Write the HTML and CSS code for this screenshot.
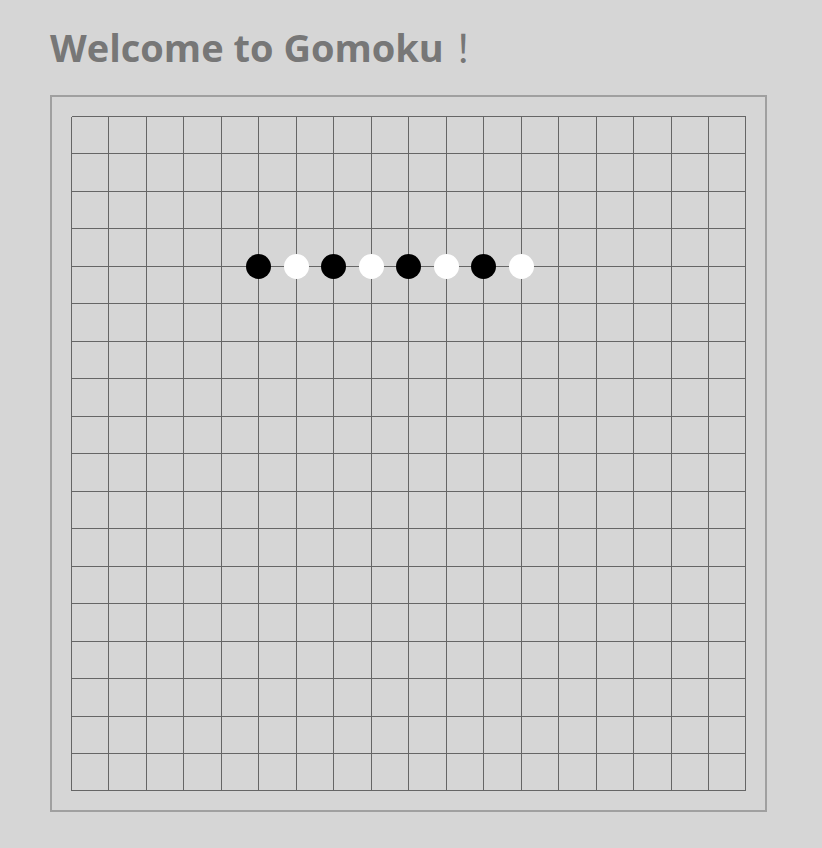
FILE: index.html
```html
<!DOCTYPE html>
<html>
<head>
<meta charset="utf-8">
<link rel="stylesheet" href="styles.css">
</head>
<body>
<div class="page">
  <h1 class="title">Welcome to Gomoku<span class="bang">！</span></h1>
  <div class="board">
    <svg class="grid" width="675" height="675" viewBox="0 0 675 675" id="grid"></svg>
  </div>
</div>
<script src="app.js"></script>
</body>
</html>
```

FILE: styles.css
```css
html, body {
  margin: 0;
  padding: 0;
  background: #d6d6d6;
}
.page {
  padding: 22px 0 0 50px;
  display: flex;
  flex-direction: column;
  align-items: flex-start;
}
.title {
  margin: 0;
  height: 48px;
  font-family: "Open Sans", "Noto Sans", "Noto Sans CJK SC", sans-serif;
  font-weight: 700;
  font-size: 38px;
  line-height: 48px;
  color: #777777;
}
.bang {
  font-family: "Noto Sans CJK SC", sans-serif;
  font-weight: 400;
  padding-left: 10px;
}
.board {
  margin-top: 25px;
  border: 2px solid #a0a0a0;
  padding: 19px;
  width: 675px;
  height: 675px;
}
.grid {
  display: block;
}
.grid line {
  stroke: #666666;
  stroke-width: 1;
  shape-rendering: crispEdges;
}
.stone-black { fill: #000000; }
.stone-white { fill: #ffffff; }
```

FILE: app.js
```js
(function () {
  var svg = document.getElementById('grid');
  var NS = 'http://www.w3.org/2000/svg';
  var n = 18, cell = 37.5;
  function pos(i) { return (i === n ? 674 : Math.floor(i * cell)) + 0.5; }
  for (var i = 0; i <= n; i++) {
    var p = pos(i);
    var v = document.createElementNS(NS, 'line');
    v.setAttribute('x1', p); v.setAttribute('x2', p);
    v.setAttribute('y1', 0.5); v.setAttribute('y2', 674.5);
    svg.appendChild(v);
    var h = document.createElementNS(NS, 'line');
    h.setAttribute('y1', p); h.setAttribute('y2', p);
    h.setAttribute('x1', 0.5); h.setAttribute('x2', 674.5);
    svg.appendChild(h);
  }
  var stones = [[5,'b'],[6,'w'],[7,'b'],[8,'w'],[9,'b'],[10,'w'],[11,'b'],[12,'w']];
  stones.forEach(function (s) {
    var c = document.createElementNS(NS, 'circle');
    c.setAttribute('cx', pos(s[0]));
    c.setAttribute('cy', pos(4));
    c.setAttribute('r', 12.5);
    c.setAttribute('class', s[1] === 'b' ? 'stone-black' : 'stone-white');
    svg.appendChild(c);
  });
})();
```
